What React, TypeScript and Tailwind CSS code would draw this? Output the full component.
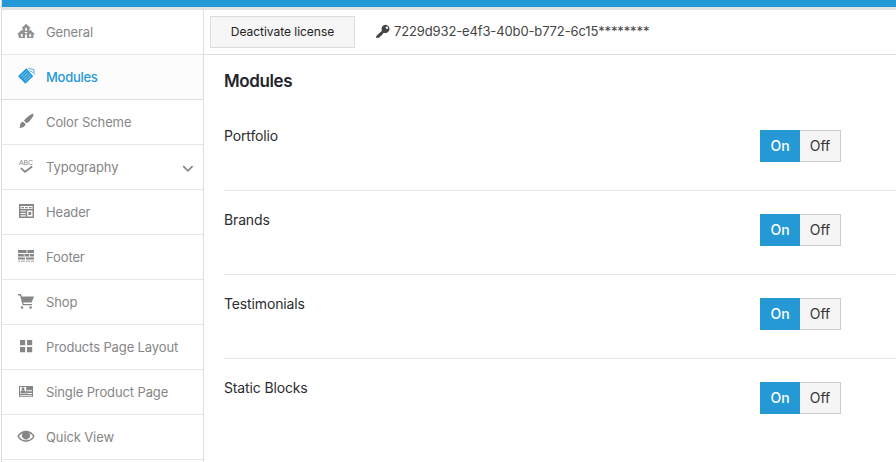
import type { ReactNode } from "react";

const Svg = ({ children }: { children: ReactNode }) => (
  <svg viewBox="0 0 20 20" className="h-5 w-5 shrink-0" fill="currentColor">
    {children}
  </svg>
);

const House = ({ x, y }: { x: number; y: number }) => (
  <path
    transform={`translate(${x} ${y})`}
    fillRule="evenodd"
    d="M4.5 0L9 4.2 8.2 5 7.7 4.6V8.3H1.3V4.6L.8 5 0 4.2ZM3.6 4.6V7H5.4V4.6L4.5 3.8Z"
  />
);

const icons = {
  general: (
    <Svg>
      <g opacity=".9">
        <House x={5.6} y={1.8} />
        <House x={1.3} y={7.8} />
        <House x={9.7} y={7.8} />
      </g>
    </Svg>
  ),
  modules: (
    <Svg>
      <path d="M2 9.2L10.3 1.2 17.2 9.3 9.4 16.8Z" />
      <path d="M12.3 1.5L17.8 2.5 18.2 7.5M13.5 3.7L17 5.5" fill="none" stroke="currentColor" strokeWidth="1" strokeOpacity=".8" />
      <path
        d="M5 9.5L10.5 4.2M6.5 11L12 5.7M8 12.5L13.5 7.2M9.4 14L14.9 8.8"
        stroke="white"
        strokeOpacity=".75"
        strokeWidth=".9"
        strokeDasharray="1.2 .5"
      />
    </Svg>
  ),
  brush: (
    <Svg>
      <path d="M17.2 1.9C17.9 2.7 17.2 4 16.5 5.2 15 7.6 12.9 9.9 10.6 11.3L7.9 8.8C9.5 6.3 12 4.2 14.5 2.7 15.5 2 16.7 1.5 17.2 1.9Z" />
      <path d="M7.1 9.8L9.6 12.1C9.3 14.4 6.6 16.3 3.2 15.8 4.2 15.1 3.9 14.3 4.1 12.8 4.3 11.1 5.6 10 7.1 9.8Z" />
    </Svg>
  ),
  typography: (
    <Svg>
      <text x="2.9" y="7.5" fontSize="7.5" fontFamily="Liberation Sans, sans-serif" textLength="14" lengthAdjust="spacingAndGlyphs">
        ABC
      </text>
      <path d="M5 11.1L9 14.8 16.2 9.6" fill="none" stroke="currentColor" strokeWidth="1.8" />
    </Svg>
  ),
  header: (
    <Svg>
      <path
        fillRule="evenodd"
        d="M3.5 2H17.5Q18 2 18 2.5V15.5Q18 16 17.5 16H3.5Q3 16 3 15.5V2.5Q3 2 3.5 2ZM4.5 4V7H16.5V4ZM4.5 8.5V9.6H9.8V8.5ZM4.5 10.9V12H9.8V10.9ZM4.5 13.3V14.4H9.8V13.3ZM11.2 8.6V14.4H16.5V8.6Z"
      />
      <path d="M5.4 4.9H8V6.2H5.4ZM9.2 4.9H11.8V6.2H9.2ZM13 4.9H15.6V6.2H13ZM12.5 10H15.2V13H12.5Z" />
    </Svg>
  ),
  footer: (
    <Svg>
      <path d="M2 3H10.6V6H2ZM11.4 3H18V6H11.4ZM2 7H7.8V9.6H2ZM8.5 7H13.2V9.6H8.5ZM14 7H18V9.6H14ZM2 10.6H9V12.6H2ZM10 10.6H18V12.6H10Z" />
      <path opacity=".5" d="M2 13.6H4V15H2ZM5 13.6H9V15H5ZM10 13.6H14V15H10ZM15 13.6H18V15H15Z" />
    </Svg>
  ),
  shop: (
    <Svg>
      <path d="M2 2H5L5.8 4.5H18L15.6 10.6H7.2L7.6 12H16V13.2H6.6L4.1 3.4H2Z" />
      <circle cx="6" cy="15.5" r="1.3" />
      <circle cx="14.6" cy="15.5" r="1.3" />
    </Svg>
  ),
  grid: (
    <Svg>
      <path d="M4 3H9.2V8.3H4ZM11 3H16.2V8.3H11ZM4 10H9.2V15.3H4ZM11 10H16.2V15.3H11Z" />
    </Svg>
  ),
  single: (
    <Svg>
      <path fillRule="evenodd" d="M3 4H17V15H3ZM4 5V11.8H10.2V5ZM11.2 8.3V9.3H16V8.3ZM11.2 11V12H16V11ZM4 13.2V14.2H16V13.2Z" />
      <circle cx="7" cy="6.8" r="1.5" />
      <path d="M4.5 11.2V9.2L6 8.3H8.2L9.7 9.2V11.2Z" />
    </Svg>
  ),
  eye: (
    <Svg>
      <path
        fillRule="evenodd"
        d="M10 3.8C14 3.8 17 6.2 18.6 9.3 17 12.5 14 14.8 10 14.8S3 12.5 1.4 9.3C3 6.2 6 3.8 10 3.8ZM6.9 5.9C5.2 6.7 3.9 7.8 3 9.3 4.4 11.7 6.9 13.3 10 13.3S15.6 11.7 17 9.3C16.1 7.8 14.8 6.7 13.1 5.9A4 4 0 1 1 6.9 5.9Z"
      />
    </Svg>
  ),
};

const items: { icon: keyof typeof icons; label: string }[] = [
  { icon: "general", label: "General" },
  { icon: "modules", label: "Modules" },
  { icon: "brush", label: "Color Scheme" },
  { icon: "typography", label: "Typography" },
  { icon: "header", label: "Header" },
  { icon: "footer", label: "Footer" },
  { icon: "shop", label: "Shop" },
  { icon: "grid", label: "Products Page Layout" },
  { icon: "single", label: "Single Product Page" },
  { icon: "eye", label: "Quick View" },
];

const options = ["Portfolio", "Brands", "Testimonials", "Static Blocks"];

function MenuItem({ icon, label }: { icon: keyof typeof icons; label: string }) {
  const active = label === "Modules";
  return (
    <li
      className={`flex h-[45px] items-center border-b pr-[9px] pl-3.5 ${
        active ? "border-[#dedede] bg-[#fcfcfc] text-[#2499d6]" : "border-[#e6e6e6] text-[#868686]"
      }`}
    >
      {icons[icon]}
      <span
        className={`ml-2.5 text-[13px] leading-5 whitespace-nowrap ${
          active ? "font-medium tracking-[-0.28px]" : "tracking-[-0.12px]"
        }`}
      >
        {label}
      </span>
      {label === "Typography" && (
        <svg viewBox="0 0 12 12" className="mt-[3px] ml-auto h-3 w-3" fill="none" stroke="#868686" strokeWidth="1.8">
          <path d="M1.2 3.2L5.9 7.8L10.6 3.2" />
        </svg>
      )}
    </li>
  );
}

export default function App() {
  return (
    <div className="h-[462px] overflow-hidden bg-white pl-px font-[Inter,'Liberation_Sans',sans-serif] text-[#2b2d30]">
      <div className="border-l border-[#dedede]">
        <div className="h-[7px] bg-[#2499d6]" />
        <div className="h-[3px] bg-[#e2e2e2]" />
        <div className="flex">
          <ul className="w-[202px] shrink-0 border-r border-[#dedede]">
            {items.map((item) => (
              <MenuItem key={item.label} {...item} />
            ))}
            <li className="h-5" />
          </ul>
          <main className="grow">
            <div className="flex h-[45px] items-center border-b border-[#dedede] pl-1.5">
              <button className="h-8 w-[145px] border border-[#dcdcdc] bg-[#f6f6f6] text-[12px] tracking-[-0.03px] text-[#222]">
                Deactivate license
              </button>
              <svg viewBox="0 0 16 16" className="ml-5 h-4 w-4" fill="#444">
                <path
                  fillRule="evenodd"
                  d="M10.6 .8A4.1 4.1 0 1 1 8.9 8.7L7.6 9.9 7.1 11.3 5.6 11.7 5.2 13 3.6 13.7 1.2 14 1.3 12 6.9 6.7A4.1 4.1 0 0 1 10.6 .8ZM11.6 2.6A1.2 1.2 0 1 0 13 4.2 1.2 1.2 0 0 0 11.6 2.6Z"
                />
              </svg>
              <span className="ml-[3px] text-[13px] tracking-[-0.13px] whitespace-nowrap text-[#444]">
                7229d932-e4f3-40b0-b772-6c15********
              </span>
            </div>
            <div className="pl-5">
              <h1 className="pt-3.5 text-[17px] leading-6 font-semibold tracking-[-0.4px] text-[#23252a]">Modules</h1>
              <div className="mt-3.5">
                {options.map((name) => (
                  <div key={name} className="flex h-[84px] items-start border-b border-[#e4e4e4] pt-[23px] last:border-b-0">
                    <span className="-mt-1 w-[536px] text-[14px] leading-5 tracking-[-0.14px]">{name}</span>
                    <div className="flex h-8 text-[14px]">
                      <button className="w-10 bg-[#2499d6] pb-0.5 font-medium tracking-[-0.1px] text-white">On</button>
                      <button className="w-[41px] border border-l-0 border-[#cbcbcb] bg-[#f5f5f5] pb-0.5 text-[#333]">Off</button>
                    </div>
                  </div>
                ))}
              </div>
            </div>
          </main>
        </div>
      </div>
    </div>
  );
}
